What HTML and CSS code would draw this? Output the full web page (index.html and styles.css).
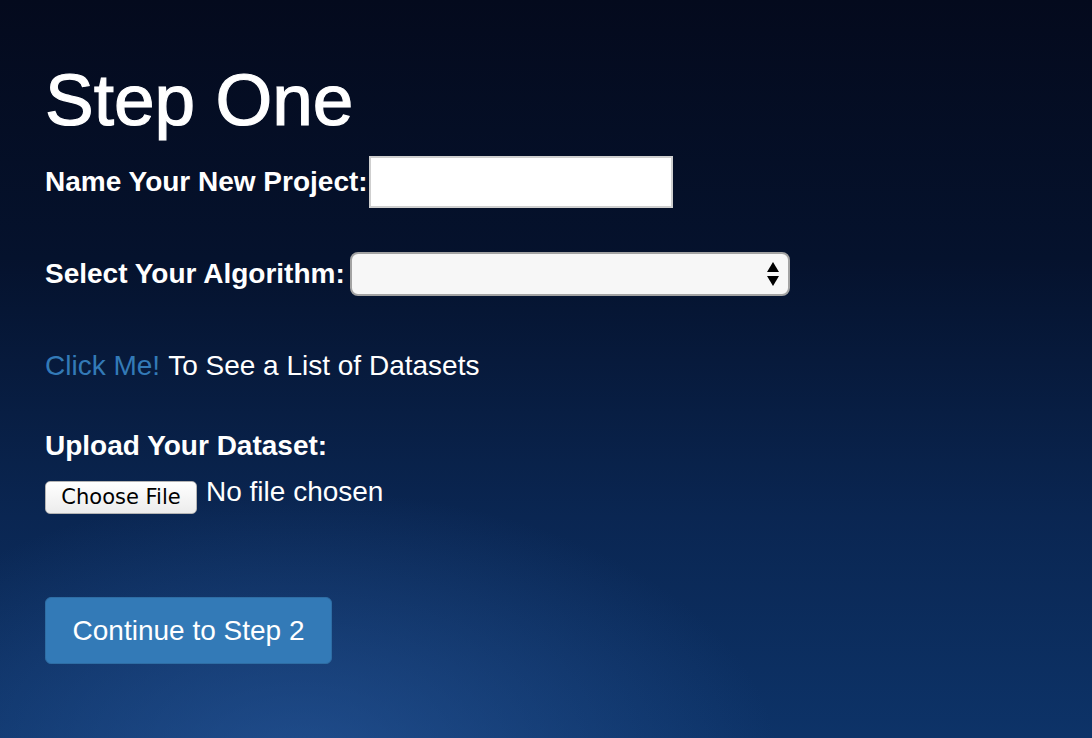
FILE: index.html
```html
<!DOCTYPE html>
<html lang="en">
<head>
<meta charset="utf-8">
<title>Step One</title>
<link rel="stylesheet" href="styles.css">
</head>
<body>
<main class="page">
  <h1 class="title">Step One</h1>
  <div class="row row-name">
    <label class="label" for="project">Name Your New Project:</label>
    <input class="text-input" id="project" type="text">
  </div>
  <div class="row row-algo">
    <label class="label" for="algo">Select Your Algorithm:</label>
    <div class="select-wrap">
      <select class="select" id="algo"><option></option></select>
      <svg class="select-arrows" width="14" height="26" viewBox="0 0 14 26" aria-hidden="true">
        <path d="M7 1 L13 11 L1 11 Z" fill="#000"/>
        <path d="M1 15 L13 15 L7 25 Z" fill="#000"/>
      </svg>
    </div>
  </div>
  <p class="row line"><a class="link" href="#">Click Me!</a> To See a List of Datasets</p>
  <p class="row label upload-label">Upload Your Dataset:</p>
  <div class="row file-row">
    <button type="button" class="file-btn">Choose File</button>
    <span class="file-text">No file chosen</span>
  </div>
  <div class="row submit-row">
    <button type="button" class="primary-btn">Continue to Step 2</button>
  </div>
</main>
</body>
</html>
```
FILE: styles.css
```css
html, body {
  margin: 0;
  height: 100%;
}
body {
  font-family: "Liberation Sans", Arial, sans-serif;
  color: #fff;
  background:
    radial-gradient(ellipse 480px 280px at 300px 770px, rgba(45, 95, 165, 0.6), rgba(45, 95, 165, 0) 100%),
    linear-gradient(to bottom, #040a1d 0%, #05122d 35%, #0a2652 70%, #0d3368 100%);
  overflow: hidden;
}
.page {
  padding: 64px 0 0 45px;
  display: flex;
  flex-direction: column;
  align-items: flex-start;
}
.title {
  margin: 0;
  font-size: 73px;
  line-height: 72px;
  font-weight: normal;
  -webkit-text-stroke: 1.2px #fff;
}
.row {
  margin: 0;
  display: flex;
  align-items: center;
}
.label {
  font-size: 28px;
  line-height: 32px;
  font-weight: bold;
}
.row-name {
  margin-top: 20px;
}
.text-input {
  margin-left: 1px;
  width: 304px;
  height: 52px;
  box-sizing: border-box;
  border: 2px solid #cfcfcf;
  background: #fff;
  padding: 0 6px;
  font-size: 20px;
}
.row-algo {
  margin-top: 44px;
}
.select-wrap {
  position: relative;
  margin-left: 5px;
}
.select {
  display: block;
  width: 440px;
  height: 44px;
  box-sizing: border-box;
  appearance: none;
  -webkit-appearance: none;
  border: 2px solid #a3a3a3;
  border-radius: 8px;
  background: #f7f7f7;
  font-size: 20px;
}
.select-arrows {
  position: absolute;
  right: 10px;
  top: 9px;
  pointer-events: none;
}
.line {
  margin-top: 54px;
  font-size: 28px;
  line-height: 32px;
}
.link {
  color: #337ab7;
  text-decoration: none;
  margin-right: 8px;
}
.upload-label {
  margin-top: 48px;
}
.file-row {
  margin-top: 14px;
  align-items: flex-start;
}
.file-btn {
  margin-top: 5px;
  width: 152px;
  height: 33px;
  box-sizing: border-box;
  border: 1px solid #b4b4b4;
  border-radius: 5px;
  background: linear-gradient(to bottom, #ffffff, #ececec);
  color: #000;
  font-family: "DejaVu Sans", sans-serif;
  font-size: 21px;
  line-height: 31px;
  padding: 0;
}
.file-text {
  margin-left: 9px;
  font-size: 28px;
  line-height: 32px;
}
.submit-row {
  margin-top: 83px;
}
.primary-btn {
  width: 287px;
  height: 67px;
  box-sizing: border-box;
  background: #337ab7;
  border: 1px solid #2e6da4;
  border-radius: 6px;
  color: #fff;
  font-family: "Liberation Sans", Arial, sans-serif;
  font-size: 28px;
  line-height: 32px;
  padding: 0;
}
```
